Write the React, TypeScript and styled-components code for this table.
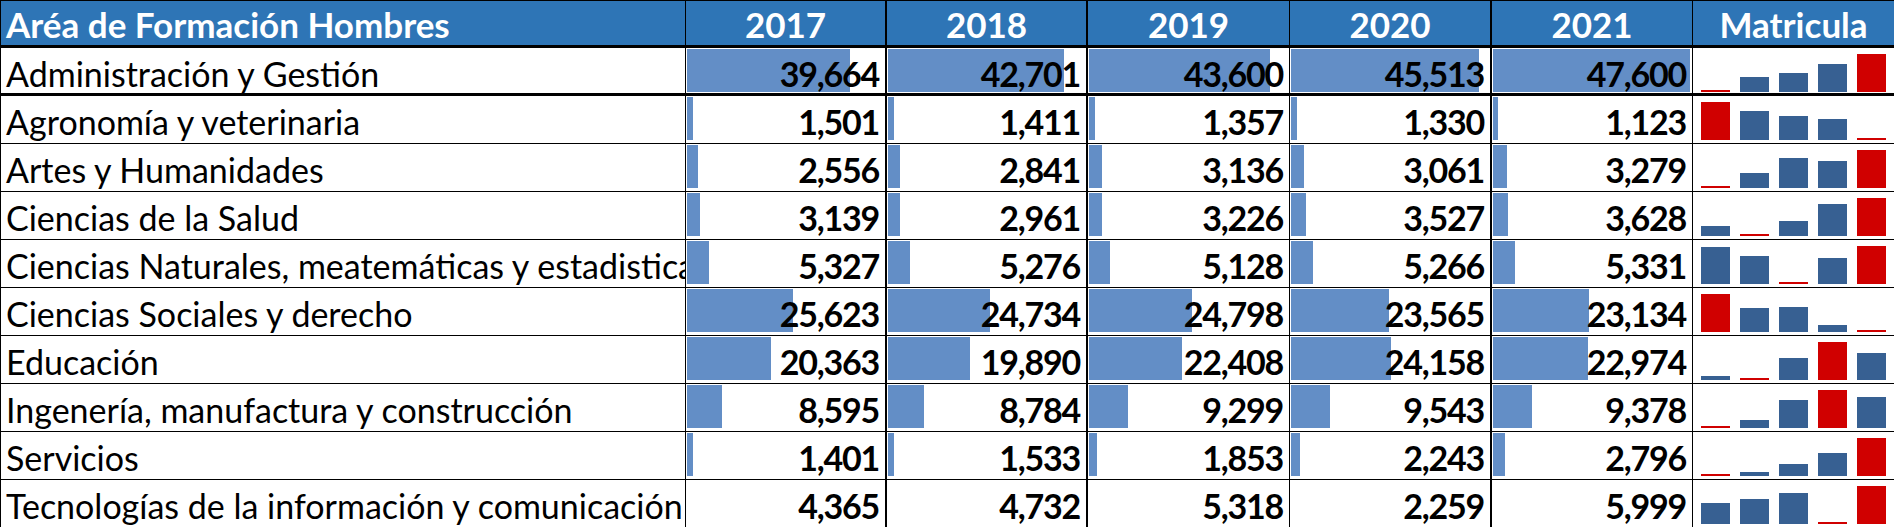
import * as React from "react";
import styled, { createGlobalStyle } from "styled-components";

const YEARS = [2017, 2018, 2019, 2020, 2021];

interface IAreaRow {
  name: string;
  values: number[];
  bars: boolean;
}

const ROWS: IAreaRow[] = [
  { name: "Administración y Gestión", values: [39664, 42701, 43600, 45513, 47600], bars: true },
  { name: "Agronomía y veterinaria", values: [1501, 1411, 1357, 1330, 1123], bars: true },
  { name: "Artes y Humanidades", values: [2556, 2841, 3136, 3061, 3279], bars: true },
  { name: "Ciencias de la Salud", values: [3139, 2961, 3226, 3527, 3628], bars: true },
  { name: "Ciencias Naturales, meatemáticas y estadistica", values: [5327, 5276, 5128, 5266, 5331], bars: true },
  { name: "Ciencias Sociales y derecho", values: [25623, 24734, 24798, 23565, 23134], bars: true },
  { name: "Educación", values: [20363, 19890, 22408, 24158, 22974], bars: true },
  { name: "Ingenería, manufactura y construcción", values: [8595, 8784, 9299, 9543, 9378], bars: true },
  { name: "Servicios", values: [1401, 1533, 1853, 2243, 2796], bars: true },
  { name: "Tecnologías de la información y comunicación", values: [4365, 4732, 5318, 2259, 5999], bars: false },
];

// data bars share one scale over the whole block (max 47,600)
const BAR_MAX = 47600;
// right border of each year column (2017..2021)
const YEAR_EDGES = [2, 2, 1, 2, 1];

const GlobalStyle = createGlobalStyle`
  html, body {
    margin: 0;
    padding: 0;
    background: #fff;
    overflow: hidden;
  }
  body {
    font-family: Lato, "Open Sans", sans-serif;
  }
`;

const Sheet = styled.div`
  width: 1894px;
  height: 527px;
  overflow: hidden;
  border-top: 1px solid #000;
  box-sizing: border-box;
`;

const Row = styled.div<{ $head?: boolean; $thick?: boolean }>`
  display: grid;
  grid-template-columns: 686px 201px 201px 202px 202px 201px 201px;
  height: ${(p) => (p.$head ? 47 : 48)}px;
  box-sizing: border-box;
  border-bottom: ${(p) => (p.$thick ? 3 : 1)}px solid #000;
  background: ${(p) => (p.$head ? "#2e75b6" : "#fff")};
  color: ${(p) => (p.$head ? "#fff" : "#000")};
`;

const Cell = styled.div<{ $edge: number; $head?: boolean }>`
  position: relative;
  box-sizing: border-box;
  border-right: ${(p) => p.$edge}px solid #000;
  overflow: hidden;
  white-space: nowrap;
  font-size: ${(p) => (p.$head ? 35 : 34)}px;
  line-height: 36px;
  padding-top: ${(p) => (p.$head ? 5 : 8)}px;
`;

const NameCell = styled(Cell)`
  border-left: 1px solid #000;
  padding-left: 5px;
  font-weight: ${(p) => (p.$head ? 700 : 400)};
`;

const YearHead = styled(Cell)`
  text-align: center;
  font-weight: 700;
`;

const NumCell = styled(Cell)`
  text-align: right;
  padding-right: 6px;
  font-weight: 700;
  letter-spacing: -1.2px;
`;

const NumText = styled.span`
  position: relative;
`;

const DataBar = styled.div`
  position: absolute;
  left: 1px;
  top: 1px;
  height: 43px;
  background: #638ec6;
`;

const SparkCell = styled(Cell)`
  padding: 0 0 0 8px;
  display: flex;
  align-items: flex-end;
  gap: 10px;
  height: 44px;
`;

const SparkBar = styled.div<{ $mark: boolean }>`
  width: 29px;
  flex: none;
  background: ${(p) => (p.$mark ? "#d00000" : "#376092")};
`;

const fmt = (n: number) => n.toLocaleString("en-US");

const Sparkline: React.FC<{ values: number[] }> = ({ values }) => {
  const min = Math.min(...values);
  const max = Math.max(...values);
  return (
    <SparkCell $edge={0}>
      {values.map((v, i) => {
        const h = max === min ? 38 : ((v - min) / (max - min)) * 38;
        return <SparkBar key={i} $mark={v === min || v === max} style={{ height: Math.max(2, Math.round(h)) }} />;
      })}
    </SparkCell>
  );
};

const App: React.FC = () => {
  return (
    <>
      <GlobalStyle />
      <Sheet>
        <Row $head $thick>
          <NameCell $edge={1} $head>
            Aréa de Formación Hombres
          </NameCell>
          {YEARS.map((y, i) => (
            <YearHead key={y} $edge={YEAR_EDGES[i]} $head>
              {y}
            </YearHead>
          ))}
          <YearHead $edge={0} $head>
            Matricula
          </YearHead>
        </Row>
        {ROWS.map((row, r) => (
          <Row key={row.name} $thick={r === 0}>
            <NameCell $edge={1}>{row.name}</NameCell>
            {row.values.map((v, i) => {
              const pct = (v / BAR_MAX) * 100;
              return (
                <NumCell key={i} $edge={YEAR_EDGES[i]}>
                  {row.bars && <DataBar style={{ width: `calc(${pct}% - ${(pct * 3) / 100}px)` }} />}
                  <NumText>{fmt(v)}</NumText>
                </NumCell>
              );
            })}
            <Sparkline values={row.values} />
          </Row>
        ))}
      </Sheet>
    </>
  );
};

export default App;
